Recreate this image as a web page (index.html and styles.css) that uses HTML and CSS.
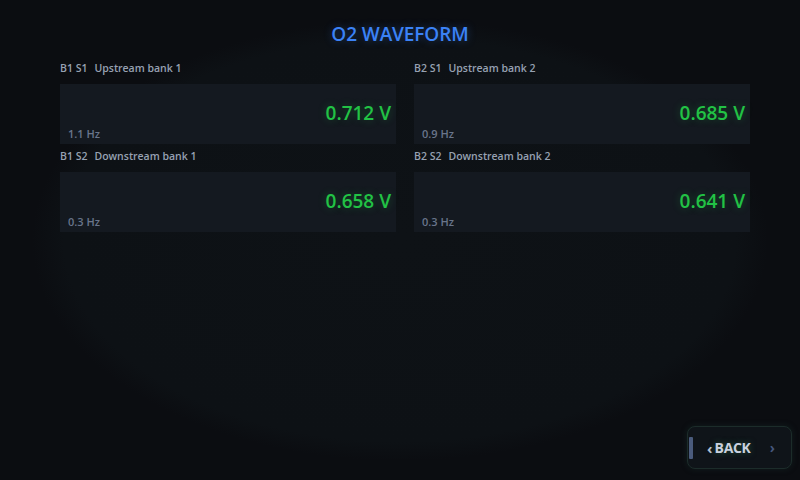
FILE: index.html
```html
<!DOCTYPE html>
<html lang="en">
<head>
<meta charset="utf-8">
<title>O2 Waveform</title>
<link rel="stylesheet" href="styles.css">
</head>
<body>
<div class="screen">
  <h1 class="title">O2 WAVEFORM</h1>
  <div class="grid">
    <div class="cell">
      <div class="label"><span class="id">B1 S1</span><span>Upstream bank 1</span></div>
      <div class="panel">
        <div class="value">0.712 V</div>
        <div class="freq">1.1 Hz</div>
      </div>
    </div>
    <div class="cell">
      <div class="label"><span class="id">B2 S1</span><span>Upstream bank 2</span></div>
      <div class="panel">
        <div class="value">0.685 V</div>
        <div class="freq">0.9 Hz</div>
      </div>
    </div>
    <div class="cell">
      <div class="label"><span class="id">B1 S2</span><span>Downstream bank 1</span></div>
      <div class="panel">
        <div class="value">0.658 V</div>
        <div class="freq">0.3 Hz</div>
      </div>
    </div>
    <div class="cell">
      <div class="label"><span class="id">B2 S2</span><span>Downstream bank 2</span></div>
      <div class="panel">
        <div class="value">0.641 V</div>
        <div class="freq">0.3 Hz</div>
      </div>
    </div>
  </div>
  <button class="back"><span class="bar"></span><span class="lt">‹</span><span class="txt">BACK</span><span class="gt">›</span></button>
</div>
</body>
</html>
```
FILE: styles.css
```css
html, body {
  margin: 0;
  padding: 0;
  width: 800px;
  height: 480px;
  overflow: hidden;
  background: #0b0d11;
  font-family: "Open Sans", "Noto Sans", sans-serif;
}

.screen {
  position: relative;
  width: 800px;
  height: 480px;
  box-sizing: border-box;
  padding: 22px 50px 0 60px;
  background: radial-gradient(ellipse closest-side at 50% 50%, #0e1216 0%, #0d1115 84%, #0b0d11 92%);
}

.title {
  margin: 0 0 14px -10px;
  text-align: center;
  font-size: 19px;
  line-height: 24px;
  font-weight: 600;
  color: #3b82f6;
  letter-spacing: -0.1px;
  text-shadow: 0 0 8px rgba(59, 130, 246, 0.35);
}

.grid {
  display: grid;
  grid-template-columns: 336px 336px;
  column-gap: 18px;
  row-gap: 4px;
}

.label {
  display: flex;
  gap: 7px;
  font-size: 10.5px;
  line-height: 16px;
  font-weight: 600;
  color: #97a1b2;
  margin-bottom: 8px;
}

.panel {
  height: 60px;
  box-sizing: border-box;
  background: #141920;
  display: flex;
  flex-direction: column;
  padding: 0 5px 0 8px;
}

.value {
  margin-top: 17px;
  align-self: flex-end;
  font-size: 19px;
  line-height: 24px;
  font-weight: 600;
  color: #22c245;
  text-shadow: 0 0 8px rgba(34, 194, 69, 0.3);
}

.freq {
  margin-top: 2px;
  font-size: 11px;
  line-height: 14px;
  font-weight: 600;
  color: #69758b;
}

.back {
  position: absolute;
  left: 687px;
  top: 426px;
  width: 105px;
  height: 43px;
  box-sizing: border-box;
  border: 1px solid #1c2c2a;
  border-radius: 8px;
  background: #0f1419;
  box-shadow: 0 0 6px rgba(30, 60, 55, 0.35);
  display: flex;
  align-items: center;
  padding: 0;
  font-family: "Open Sans", "Noto Sans", sans-serif;
  cursor: pointer;
}

.bar {
  width: 4px;
  height: 22px;
  margin-left: 1px;
  background: #4a5b7c;
  border-radius: 1px;
}

.lt {
  margin-left: 14px;
  font-size: 15px;
  font-weight: 700;
  color: #b8c2d2;
  line-height: 20px;
}

.txt {
  margin-left: 2px;
  font-size: 14px;
  font-weight: 700;
  color: #c9d1de;
  line-height: 20px;
  letter-spacing: -0.3px;
  text-shadow: 0 0 6px rgba(40, 120, 80, 0.6);
}

.gt {
  margin-left: 19px;
  font-size: 14px;
  font-weight: 700;
  color: #46577c;
  line-height: 20px;
}
```
